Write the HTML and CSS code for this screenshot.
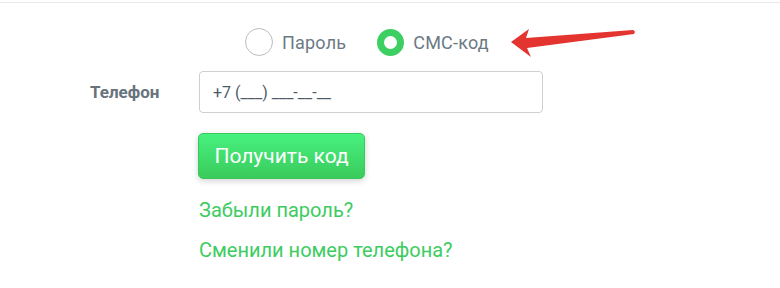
FILE: index.html
```html
<!DOCTYPE html>
<html lang="ru">
<head>
<meta charset="utf-8">
<link rel="stylesheet" href="styles.css">
</head>
<body>
<div class="panel">
  <div class="modes">
    <label class="mode"><span class="radio"></span><span class="mode-text">Пароль</span></label>
    <label class="mode"><span class="radio radio-on"></span><span class="mode-text">СМС-код</span></label>
    <svg class="arrow" width="130" height="34" viewBox="0 0 130 34">
      <path d="M2 16 L20 3 L17 12 L124 4 Q127 5 125 8 L18 22 L22 31 Z" fill="#e3342f"/>
    </svg>
  </div>
  <div class="row">
    <div class="label">Телефон</div>
    <div class="input">+7 (___) ___-__-__</div>
  </div>
  <div class="actions">
    <button class="btn">Получить код</button>
    <a class="link">Забыли пароль?</a>
    <a class="link">Сменили номер телефона?</a>
  </div>
</div>
</body>
</html>
```
FILE: styles.css
```css
html, body { margin: 0; padding: 0; background: #fff; }
body { font-family: Roboto, "Noto Sans", sans-serif; }
.panel {
  margin-top: 2px;
  border-top: 1px solid #e8e8e8;
  height: 285px;
}
.modes {
  display: flex;
  align-items: center;
  padding-left: 245px;
  margin-top: 25px;
  height: 28px;
}
.mode { display: flex; align-items: center; margin-right: 30px; }
.radio {
  box-sizing: border-box;
  width: 28px; height: 28px;
  border-radius: 50%;
  border: 1px solid #bdbdbd;
  margin-right: 9px;
}
.radio-on { border: 7px solid #3ecf62; width: 27px; height: 27px; margin-left: 1px; }
.mode-text { font-size: 18px; color: #6c7a86; letter-spacing: 0.2px; }
.arrow { margin-left: -10px; margin-top: 2px; }
.row { display: flex; align-items: center; margin-top: 15px; }
.label {
  width: 199px; box-sizing: border-box; padding-left: 90px;
  font-weight: bold; font-size: 17px; color: #67737d;
}
.input {
  box-sizing: border-box;
  width: 344px; height: 42px;
  border: 1px solid #cfcfcf;
  border-radius: 4px;
  padding-left: 13px;
  display: flex; align-items: center;
  font-size: 16px; color: #4d5b66;
}
.actions { display: flex; flex-direction: column; align-items: flex-start; padding-left: 198px; margin-top: 20px; }
.btn {
  font-family: Roboto, sans-serif;
  height: 46px; width: 167px;
  border: 1px solid #37c95a;
  border-radius: 5px;
  background: linear-gradient(#47f17f, #3acb5c);
  color: #fff; font-size: 21px;
  box-shadow: 0 2px 6px rgba(0,0,0,0.18);
  padding: 0;
}
.link { color: #3dcc5f; font-size: 20px; line-height: 24px; margin-top: 19px; margin-left: 1px; }
.link + .link { margin-top: 16px; }
```
